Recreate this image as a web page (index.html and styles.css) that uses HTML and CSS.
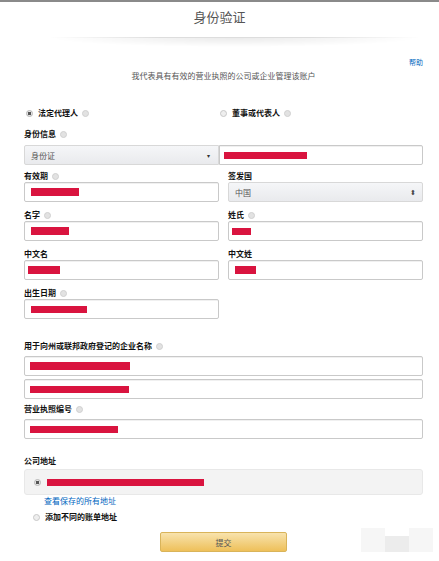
FILE: index.html
```html
<!DOCTYPE html>
<html lang="zh-CN">
<head>
    <meta charset="UTF-8">
    <meta name="viewport" content="width=device-width, initial-scale=1.0">
    <title>身份验证</title>
    <link rel="stylesheet" href="styles.css">
</head>
<body>

<div class="topbar"></div>
<h1 class="title">身份验证</h1>
<div class="divider"></div>

<div class="page">
    <div class="help-row"><a href="#" class="link">帮助</a></div>
    <p class="subtitle">我代表具有有效的营业执照的公司或企业管理该账户</p>

    <div class="role-row">
        <label class="radio-item first">
            <span class="radio checked"></span>法定代理人<span class="help"></span>
        </label>
        <label class="radio-item">
            <span class="radio"></span>董事或代表人<span class="help"></span>
        </label>
    </div>

    <div class="label">身份信息<span class="help"></span></div>
    <div class="id-group">
        <div class="select id-type">身份证<span class="caret">▾</span></div>
        <div class="input id-number"><span class="redact" style="width: 83px"></span></div>
    </div>

    <div class="grid">
        <div class="field">
            <div class="label">有效期<span class="help"></span></div>
            <div class="input"><span class="redact tall" style="width: 48px"></span></div>
        </div>
        <div class="field">
            <div class="label">签发国</div>
            <div class="select">中国<span class="arrows">⬍</span></div>
        </div>
        <div class="field">
            <div class="label">名字<span class="help"></span></div>
            <div class="input"><span class="redact tall" style="width: 38px"></span></div>
        </div>
        <div class="field">
            <div class="label">姓氏<span class="help"></span></div>
            <div class="input narrow"><span class="redact" style="width: 19px"></span></div>
        </div>
        <div class="field">
            <div class="label">中文名</div>
            <div class="input narrow"><span class="redact tall" style="width: 32px"></span></div>
        </div>
        <div class="field">
            <div class="label">中文姓</div>
            <div class="input"><span class="redact tall" style="width: 21px"></span></div>
        </div>
        <div class="field">
            <div class="label">出生日期<span class="help"></span></div>
            <div class="input"><span class="redact" style="width: 56px"></span></div>
        </div>
    </div>

    <div class="section">
        <div class="label">用于向州或联邦政府登记的企业名称<span class="help"></span></div>
        <div class="input wide"><span class="redact tall" style="width: 100px"></span></div>
        <div class="input wide"><span class="redact" style="width: 99px"></span></div>
        <div class="label">营业执照编号<span class="help"></span></div>
        <div class="input wide"><span class="redact" style="width: 88px"></span></div>
    </div>

    <div class="section address">
        <div class="label">公司地址</div>
        <div class="address-box">
            <span class="radio checked"></span><span class="redact" style="width: 157px"></span>
        </div>
        <a href="#" class="link saved">查看保存的所有地址</a>
        <label class="radio-item other">
            <span class="radio"></span>添加不同的账单地址
        </label>
    </div>

    <div class="actions">
        <button type="submit" class="submit">提交</button>
    </div>
</div>

<div class="watermark">
    <span class="wm light"></span>
    <span class="wm dark"></span>
    <span class="wm light"></span>
</div>

</body>
</html>
```

FILE: styles.css
```css
* {
    margin: 0;
    padding: 0;
    box-sizing: border-box;
}

body {
    font-family: "Noto Sans CJK SC", "Noto Sans", sans-serif;
    background-color: #fff;
    color: #111;
    font-size: 8px;
    position: relative;
    height: 561px;
    overflow: hidden;
}

.topbar {
    height: 2px;
    background-color: #8a8a8a;
}

.title {
    font-size: 13px;
    font-weight: normal;
    color: #555;
    text-align: center;
    line-height: 16px;
    margin-top: 7px;
}

.divider {
    height: 10px;
    margin: 12px 20px 0 50px;
    background: radial-gradient(ellipse at 50% 0, rgba(0, 0, 0, 0.08), rgba(0, 0, 0, 0) 70%);
    border-top: 1px solid transparent;
    border-image: linear-gradient(to right, rgba(0, 0, 0, 0), #ddd 30%, #ddd 70%, rgba(0, 0, 0, 0)) 1;
}

.page {
    padding: 0 16px 0 24px;
}

.link {
    color: #0066c0;
    text-decoration: none;
}

.help-row {
    text-align: right;
    font-size: 7px;
    line-height: 10px;
    margin-top: 10px;
}

.subtitle {
    text-align: center;
    color: #555;
    line-height: 12px;
    margin-top: 3px;
}

.role-row {
    display: flex;
    margin-top: 25px;
    line-height: 12px;
}

.radio-item {
    display: flex;
    align-items: center;
    font-weight: bold;
}

.radio-item.first {
    width: 196px;
    padding-left: 2px;
}

.radio {
    width: 7px;
    height: 7px;
    border-radius: 50%;
    border: 1px solid #c8c8c8;
    background-color: #eee;
    margin-right: 5px;
    flex-shrink: 0;
}

.radio.checked {
    background: radial-gradient(circle, #555 0, #555 1.5px, #e6e6e6 2px);
    border-color: #b5b5b5;
}

.help {
    display: inline-block;
    width: 7px;
    height: 7px;
    border-radius: 50%;
    background-color: #e2e2e2;
    border: 1px solid #d0d0d0;
    margin-left: 4px;
    vertical-align: -1px;
}

.label {
    font-weight: bold;
    line-height: 12px;
    display: flex;
    align-items: center;
}

.role-row + .label {
    margin-top: 9px;
}

.id-group {
    display: flex;
    margin-top: 5px;
}

.select,
.input {
    height: 20px;
    display: flex;
    align-items: center;
    padding: 0 6px;
    border-radius: 2px;
    color: #555;
    font-weight: normal;
}

.input {
    background-color: #fff;
    border: 1px solid #c9c9c9;
    box-shadow: inset 0 1px 0 rgba(0, 0, 0, 0.06);
}

.input.narrow {
    padding-left: 3px;
}

.select {
    background: linear-gradient(#f5f6f8, #e9eaed);
    border: 1px solid #d8d8d8;
    position: relative;
}

.id-type {
    width: 195px;
    border-radius: 2px 0 0 2px;
}

.id-number {
    flex: 1;
    padding-left: 4px;
    border-radius: 0 2px 2px 0;
}

.caret {
    margin-left: auto;
    font-size: 6px;
    color: #333;
    margin-right: 2px;
}

.arrows {
    margin-left: auto;
    font-size: 7px;
    color: #444;
}

.grid {
    display: grid;
    grid-template-columns: 195px 195px;
    column-gap: 9px;
    row-gap: 7px;
    margin-top: 5px;
}

.redact {
    display: block;
    height: 7px;
    background-color: #d9143f;
}

.redact.tall {
    height: 8px;
}

.section {
    margin-top: 21px;
}

.section .input {
    margin-top: 3px;
    padding-left: 5px;
}

.section .label + .input {
    margin-top: 4px;
}

.section .input + .label {
    margin-top: 4px;
}

.address {
    margin-top: 16px;
}

.address-box {
    height: 26px;
    margin-top: 2px;
    background-color: #f3f3f3;
    border: 1px solid #e8e8e8;
    border-radius: 3px;
    display: flex;
    align-items: center;
    padding-left: 9px;
}

.address-box .radio {
    margin-right: 6px;
}

.saved {
    display: block;
    line-height: 12px;
    padding-left: 20px;
}

.radio-item.other {
    line-height: 12px;
    margin-top: 4px;
    padding-left: 9px;
}

.actions {
    display: flex;
    justify-content: center;
    margin-top: 9px;
}

.submit {
    width: 127px;
    height: 20px;
    font-family: inherit;
    font-size: 8px;
    color: #555;
    background: linear-gradient(#f8e3ad, #eec05a);
    border: 1px solid #d9b45a;
    border-radius: 2px;
    cursor: pointer;
}

.watermark {
    position: absolute;
    right: 6px;
    bottom: 9px;
    display: flex;
    align-items: flex-end;
}

.wm {
    display: block;
    width: 24px;
}

.wm.light {
    height: 24px;
    background-color: #f6f6f6;
}

.wm.dark {
    height: 16px;
    background-color: #ececec;
}
```
